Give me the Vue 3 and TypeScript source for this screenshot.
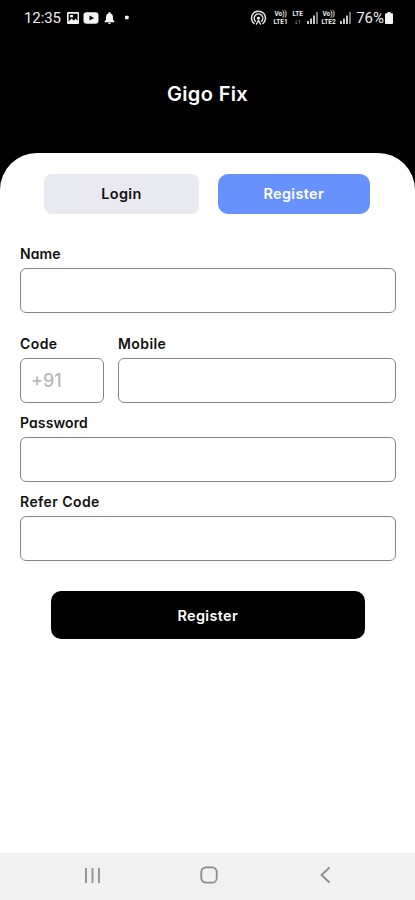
<script setup lang="ts">
import { reactive, ref } from 'vue'

type Tab = 'Login' | 'Register'

const tabs: Tab[] = ['Login', 'Register']
const activeTab = ref<Tab>('Register')
const form = reactive({ name: '', code: '', mobile: '', password: '', refer: '' })
</script>

<template>
  <div class="screen">
    <div class="status">
      <span class="time">12:35</span>
      <svg class="notes" width="68" height="14" viewBox="0 0 68 14">
        <path fill="#f4f4f4" fill-rule="evenodd" d="M1 1h10q1 0 1 1v10q0 1-1 1H1q-1 0-1-1V2q0-1 1-1zM1.6 2.8v7.6l3-3 2.2 2 2-1.6 1.8 2V2.8zM3 4h3v2.2H3z" />
        <path fill="#f4f4f4" fill-rule="evenodd" d="M19.500 1.300h9q3 0 3 3v5.400q0 3-3 3h-9q-3 0-3-3V4.300q0-3 3-3zM22.500 4.400v5.200l4.600-2.600z" />
        <path fill="#f4f4f4" d="M42.500 1q1 0 1 1.200 2.500.8 2.500 3.800v2.800l1.500 1.700v.7h-10v-.7L39 8.800V6q0-3 2.500-3.800 0-1.200 1-1.200zM41 11.700h3q-.2 1.300-1.500 1.300T41 11.700z" />
        <rect x="58" y="4.700" width="3.600" height="3.600" rx=".6" fill="#f4f4f4" />
      </svg>
      <div class="system">
        <svg width="17" height="16" viewBox="0 0 17 16" fill="none" stroke="#e4e4e4" stroke-width="1.500" stroke-linecap="round">
          <path d="M4 13.500A7 7 0 1 1 13 13.500M5.300 11.200A4.300 4.300 0 1 1 11.700 11.200" />
          <circle cx="8.500" cy="8.200" r="1.200" fill="#e4e4e4" stroke-width="1" />
          <path d="M8.500 10.500l-2 3.500M8.500 10.500l2 3.500" />
        </svg>
        <span class="net"><span>Vo))</span><span>LTE1</span></span>
        <span class="net lte"><span>LTE</span><span>↓↑</span></span>
        <svg class="signal" width="12" height="13" viewBox="0 0 12 13">
          <path fill="#c4c4c4" d="M0 10h2v3H0zM3 7.500h2V13H3zM6 4.500h2V13H6z" /><path fill="#777" d="M9 1h2v12H9z" />
        </svg>
        <span class="net"><span>Vo))</span><span>LTE2</span></span>
        <svg class="signal" width="12" height="13" viewBox="0 0 12 13">
          <path fill="#c4c4c4" d="M0 10h2v3H0zM3 7.500h2V13H3zM6 4.500h2V13H6z" /><path fill="#777" d="M9 1h2v12H9z" />
        </svg>
        <span class="percent">76%</span>
        <svg class="battery" width="8" height="12" viewBox="0 0 8 12">
          <path fill="#f4f4f4" d="M2.500 0h3v1.300H7q1 0 1 1V11q0 1-1 1H1q-1 0-1-1V2.300q0-1 1-1h1.500z" />
        </svg>
      </div>
    </div>

    <header class="header"><h1>Gigo Fix</h1></header>

    <main class="sheet">
      <nav class="tabs">
        <button
          v-for="tab in tabs"
          :key="tab"
          type="button"
          class="tab"
          :class="{ active: tab === activeTab }"
          @click="activeTab = tab"
        >{{ tab }}</button>
      </nav>

      <form class="form" @submit.prevent>
        <label class="field name"><span>Name</span><input v-model="form.name" /></label>
        <div class="phone">
          <label class="field"><span class="wide">Code</span><input v-model="form.code" placeholder="+91" /></label>
          <label class="field"><span class="wide">Mobile</span><input v-model="form.mobile" type="tel" /></label>
        </div>
        <label class="field"><span>Password</span><input v-model="form.password" type="password" /></label>
        <label class="field"><span class="wide">Refer Code</span><input v-model="form.refer" /></label>
        <button class="submit" type="submit">Register</button>
      </form>
    </main>

    <footer class="navbar">
      <svg width="17" height="17" viewBox="0 0 17 17" fill="none" stroke="#979797" stroke-width="2"><path d="M2 1v15M8.500 1v15M15 1v15" /></svg>
      <svg width="18" height="18" viewBox="0 0 18 18" fill="none" stroke="#8c8c8c" stroke-width="1.800"><rect x="1.300" y="1.300" width="15.400" height="15.400" rx="4.800" /></svg>
      <svg width="17" height="18" viewBox="0 0 17 18" fill="none" stroke="#8c8c8c" stroke-width="1.800"><path d="M12.500 1.500L4.500 9l8 7.500" /></svg>
    </footer>
  </div>
</template>

<style>
body {
  margin: 0;
}
</style>

<style scoped>
.screen {
  display: flex;
  flex-direction: column;
  width: 415px;
  height: 900px;
  overflow: hidden;
  background: #000;
  color: #111;
  font-family: Inter, 'Liberation Sans', sans-serif;
  font-feature-settings: 'cv11' 1;
}
.screen * {
  box-sizing: border-box;
}
.status {
  display: flex;
  align-items: center;
  height: 35px;
  padding: 0 22px 0 24px;
  color: #eee;
  font-family: Roboto, sans-serif;
}
.time {
  width: 43px;
  font-size: 15px;
  letter-spacing: -0.1px;
}
.notes {
  flex: none;
}
.system {
  display: flex;
  align-items: center;
  margin-left: auto;
}
.net {
  display: flex;
  flex-direction: column;
  align-items: center;
  margin-left: 5px;
  width: 17px;
  font-size: 6.500px;
  font-weight: 700;
  line-height: 8px;
  white-space: nowrap;
}
.lte {
  width: 13px;
  margin-left: 2px;
}
.signal {
  margin-left: 3px;
}
.signal + .net {
  margin-left: 1px;
}
.percent {
  margin-left: 4px;
  font-size: 15px;
}
.battery {
  margin-left: 1px;
}
.header {
  display: flex;
  align-items: center;
  justify-content: center;
  height: 118px;
}
h1 {
  margin: 0;
  color: #fff;
  font-size: 20px;
  font-weight: 600;
  line-height: 24px;
  letter-spacing: 0.35px;
}
.sheet {
  flex: 1;
  padding: 21px 19.500px 0 20px;
  border-radius: 37px 37px 0 0;
  background: #fff;
}
.tabs {
  display: grid;
  grid-template-columns: 155px 151.500px;
  gap: 19px;
  height: 39.500px;
  margin-left: 24px;
}
.tab,
.submit {
  padding: 0;
  border: 0;
  font: 600 14.500px Inter, sans-serif;
  font-feature-settings: inherit;
  letter-spacing: 0.3px;
}
.tab {
  border-radius: 8px;
  background: #e9e9f2;
  color: #111;
}
.tab.active {
  border-radius: 10px;
  background: #6792fd;
  color: #fff;
}
.form {
  display: flex;
  flex-direction: column;
  padding-top: 30.500px;
}
.field {
  display: block;
  height: 79px;
}
.name {
  height: 90px;
}
.field span {
  display: block;
  height: 24px;
  font-size: 14px;
  font-weight: 600;
  line-height: 19px;
  letter-spacing: 0.1px;
}
.field .wide {
  letter-spacing: 0.42px;
}
.field input {
  display: block;
  width: 100%;
  height: 45px;
  padding: 0 10px;
  border: 1px solid #85858f;
  border-radius: 6px;
  outline: 0;
  background: #fff;
  font: 500 18px Inter, sans-serif;
}
.field input::placeholder {
  color: #b8b8b8;
  opacity: 1;
}
.phone {
  display: grid;
  grid-template-columns: 83.500px 1fr;
  gap: 14.500px;
}
.submit {
  align-self: center;
  width: 314px;
  height: 48px;
  margin-top: 20px;
  border-radius: 10px;
  background: #000;
  color: #fff;
}
.navbar {
  display: flex;
  align-items: center;
  justify-content: space-between;
  height: 47px;
  padding: 0 81px 3px 84px;
  background: #f1f1f1;
}
</style>
